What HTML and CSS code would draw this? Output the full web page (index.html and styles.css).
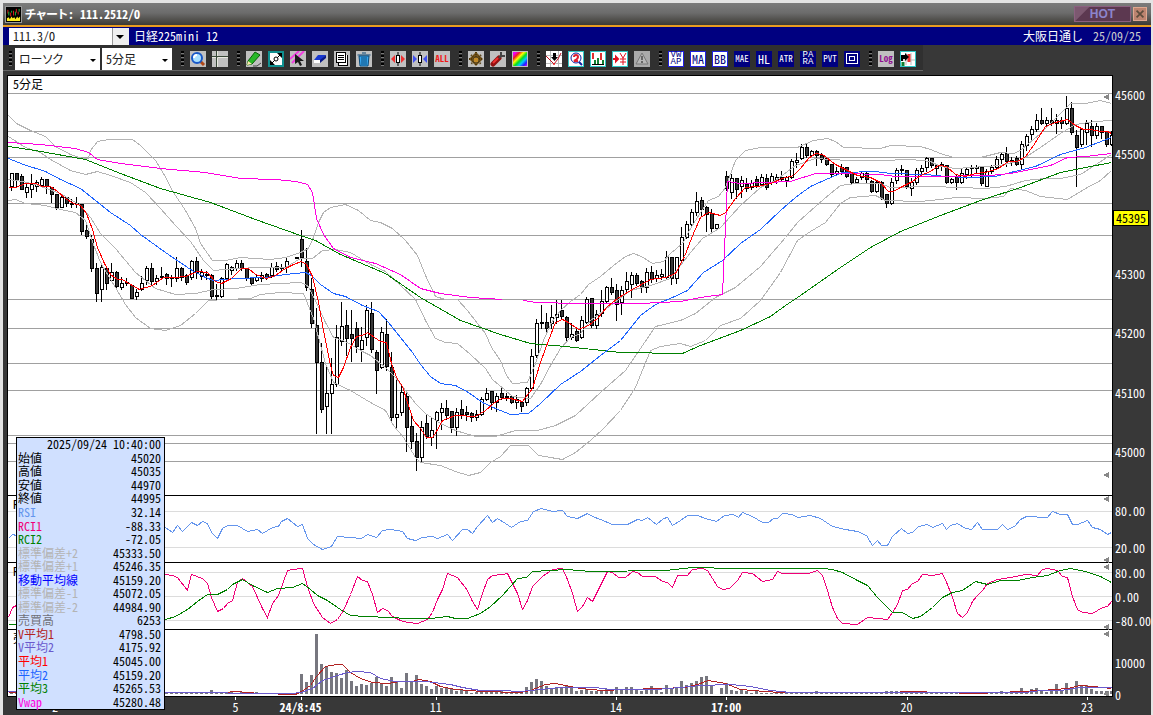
FILE: index.html
```html
<!DOCTYPE html>
<html lang="ja">

<head>
    <meta charset="UTF-8">
    <meta name="viewport" content="width=device-width, initial-scale=1.0">
    <title>チャート: 111.2512/O</title>
    <link rel="stylesheet" href="styles.css">
</head>
<body>
<div class="window">
    <div class="title-bar">
        <svg class="logo" viewBox="0 0 16 16">
            <rect width="16" height="16" fill="#000"/>
            <path d="M2 3v4M5 6v4M8 4v5M11 2v4M13 5v3" stroke="#e02020"/>
            <path d="M3 5v4M6 4v2M10 5v4M14 2v3" stroke="#20c040"/>
            <path d="M1 15v-3l2-1 1 2 2-3 1 2 2-1 1 2 2-3 1 2 2-2v5z" fill="#ffee20"/>
        </svg>
        <h1>チャート: 111.2512/O</h1>
        <button class="hot">HOT</button>
        <button class="close" aria-label="閉じる">
            <svg viewBox="0 0 14 14"><path d="M3 3l8 8M11 3l-8 8" stroke="#5c4c3c" stroke-width="2"/></svg>
        </button>
    </div>
    <div class="symbol-bar">
        <span class="combo combo-symbol">
            <select aria-label="銘柄コード"><option>111.3/O</option></select>
        </span>
        <span class="symbol-name">日経225mini 12</span>
        <span class="session">大阪日通し</span>
        <span class="date">25/09/25</span>
    </div>
    <div class="toolbar">
        <i class="grip"></i>
        <span class="combo combo-type">
            <select aria-label="チャート種類"><option>ローソク</option></select>
        </span>
        <span class="combo combo-span">
            <select aria-label="足種"><option>5分足</option></select>
        </span>
        <i class="grip"></i>
        <button class="tool" aria-label="拡大">
            <svg viewBox="0 0 16 16"><path d="M10 10l4 4" stroke="#b04818" stroke-width="3"/><circle cx="7" cy="7" r="5" fill="#a8e0ff" stroke="#1858c8" stroke-width="2"/><path d="M4 7q0-3 3-3" stroke="#fff" stroke-width="2" fill="none"/></svg>
        </button>
        <button class="tool" aria-label="十字線">
            <svg viewBox="0 0 16 16" class="crisp"><path d="M0 5.500h16M4.500 0v16" stroke="#384838"/><path d="M0 6.500h4M6 6.500h10M5.500 7v9M5.500 0v5" stroke="#e8e8e0"/></svg>
        </button>
        <i class="grip"></i>
        <button class="tool" aria-label="ペン">
            <svg viewBox="0 0 16 16"><path d="M2 10l7-9 5 3-8 9-5 1z" fill="#28b828" stroke="#086008"/><path d="M1 14l1-4 4 3z" fill="#ffe8b0"/><path d="M7 15h4l4-3" stroke="#444" fill="none"/></svg>
        </button>
        <button class="tool" aria-label="線の移動">
            <svg viewBox="0 0 16 16"><rect x="1" y="1" width="14" height="14" fill="#fff" stroke="#109090" stroke-width="2"/><path d="M3 13L13 3" stroke="#000"/><path d="M9 2h5v5zM2 9v5h5z" fill="#000"/><circle cx="8" cy="8" r="2" fill="#fff" stroke="#000"/></svg>
        </button>
        <button class="tool" aria-label="線の選択">
            <svg viewBox="0 0 16 16"><path d="M0 8l9-8M2 12L14 0" stroke="#f040e0" stroke-width="2"/><path d="M5 3v10l3-2 2 4 2-1-2-4h4z" fill="#181818"/></svg>
        </button>
        <button class="tool" aria-label="消去">
            <svg viewBox="0 0 16 16"><path d="M6 4h8l-5 5H2z" fill="#1838d0"/><path d="M2 9h6v3H2z" fill="#fff"/><path d="M8 12V9l6-5v3z" fill="#081888"/></svg>
        </button>
        <button class="tool" aria-label="コピー">
            <svg viewBox="0 0 16 16" class="crisp"><path d="M4.500 4v10.500h9V4" fill="#fff" stroke="#000"/><rect x="2.500" y="1.500" width="9" height="10" fill="#fff" stroke="#000"/><path d="M4 4.500h6M4 6.500h6M4 8.500h6" stroke="#000"/></svg>
        </button>
        <button class="tool" aria-label="削除">
            <svg viewBox="0 0 16 16"><path d="M3 5h10l-1 10H4z" fill="#38a8f0" stroke="#084878"/><path d="M1.500 4h13M6 2h4M6 6v8M8 6v8M10 6v8" stroke="#084878"/></svg>
        </button>
        <i class="grip"></i>
        <button class="tool" aria-label="間隔を広げる">
            <svg viewBox="0 0 16 16"><path d="M5 4v8L1 8zM11 4v8l4-4z" fill="#f03030"/><path d="M8 1v14" stroke="#000"/><rect x="6.500" y="4.500" width="3" height="7" fill="#fff" stroke="#000"/></svg>
        </button>
        <button class="tool" aria-label="間隔を狭める">
            <svg viewBox="0 0 16 16"><path d="M1 4v8l4-4zM15 4v8l-4-4z" fill="#4050f0"/><path d="M8 1v14" stroke="#000"/><rect x="6.500" y="4.500" width="3" height="7" fill="#fff" stroke="#000"/></svg>
        </button>
        <button class="tool tool-all">ALL</button>
        <i class="grip"></i>
        <button class="tool" aria-label="設定">
            <svg viewBox="0 0 16 16"><path d="M8 1l7 7-7 7-7-7z" fill="#705018"/><path d="M3 4l10 9M13 4L3 13M8 1v14M1 8h14" stroke="#503808" stroke-width="2" stroke-dasharray="1 1"/><circle cx="8" cy="9" r="3" fill="#c08828" stroke="#504020"/></svg>
        </button>
        <button class="tool" aria-label="ツール">
            <svg viewBox="0 0 16 16"><path d="M3 13l6-6" stroke="#901010" stroke-width="5" stroke-linecap="round"/><path d="M3 12l5-5" stroke="#f03030" stroke-width="2"/><path d="M9 7l2-2V1M11 5h4" stroke="#444" stroke-width="2" fill="none"/></svg>
        </button>
        <button class="tool" aria-label="配色">
            <svg viewBox="0 0 16 16"><defs><linearGradient id="rainbow" x1="0" y1="0" x2="1" y2="1"><stop offset=".1" stop-color="#e0f"/><stop offset=".25" stop-color="#f02020"/><stop offset=".4" stop-color="#ff0"/><stop offset=".55" stop-color="#0d2"/><stop offset=".7" stop-color="#0cf"/><stop offset=".85" stop-color="#22f"/><stop offset="1" stop-color="#d0f"/></linearGradient></defs><rect x="1" y="1" width="14" height="14" fill="url(#rainbow)"/></svg>
        </button>
        <i class="grip"></i>
        <button class="tool" aria-label="売買サイン">
            <svg viewBox="0 0 16 16"><rect width="16" height="16" fill="#fff"/><path d="M0 4.500h16M0 12.500h16M4.500 0v16M12.500 0v16" stroke="#bbb"/><path d="M0 5l4 4 4 4 4-5 3-6" stroke="#c01020" fill="none"/><path d="M7 2h3v4h2L8.500 10 5 6h2z" fill="#000"/><circle cx="8" cy="13" r="1" fill="#f02020"/></svg>
        </button>
        <button class="tool cyan" aria-label="銘柄検索">
            <svg viewBox="1 1 14 14"><path d="M11 11l3 3" stroke="#1020a0" stroke-width="2"/><circle cx="8" cy="7" r="5" fill="#fff" stroke="#1020a0"/><path d="M6 6q0-2 2-2t2 2-4 4h4" stroke="#e02030" fill="none" stroke-width="2"/></svg>
        </button>
        <button class="tool cyan" aria-label="価格帯">
            <svg viewBox="1 1 14 14"><path d="M3 2v6M11 2v7" stroke="#e03030" stroke-width="2"/><path d="M5 13V9M8 13V7M13 13V9" stroke="#108030" stroke-width="2"/><path d="M2 13.500h12" stroke="#000"/></svg>
        </button>
        <button class="tool cyan" aria-label="注文">
            <svg viewBox="1 1 14 14"><path d="M1 8h3M4 6l2 2-2 2z" fill="#e01020" stroke="#e01020" stroke-width="2"/><path d="M8 2l3 5 3-5M11 7v7M8 8h6M8 11h6" stroke="#e01020" fill="none"/></svg>
        </button>
        <button class="tool" aria-label="アラート">
            <svg viewBox="0 0 16 16"><rect width="16" height="16" fill="#aaa"/><path d="M8 2l6 11H2z" fill="#b8b8b8" stroke="#777"/><path d="M8 5v4M8 10v2" stroke="#666" stroke-width="2"/></svg>
        </button>
        <i class="grip"></i>
        <button class="tool ind on stack">VW<br>AP</button>
        <button class="tool ind on">MA</button>
        <button class="tool ind on">BB</button>
        <button class="tool ind small">MAE</button>
        <button class="tool ind">HL</button>
        <button class="tool ind small">ATR</button>
        <button class="tool ind stack">PA<br>RA</button>
        <button class="tool ind small">PVT</button>
        <button class="tool ind" aria-label="回帰">
            <svg viewBox="0 0 16 16" class="crisp"><path d="M2.500 2.500h11v10h-11zM5.500 5.500h5v4h-5z" stroke="#fff" fill="none"/></svg>
        </button>
        <i class="grip"></i>
        <button class="tool tool-log">Log</button>
        <button class="tool cyan" aria-label="画面分割">
            <svg viewBox="1 1 14 14"><path d="M1 9h14M6 2v12M11 2v12" stroke="#bbb"/><path d="M9 3v8" stroke="#f03030" stroke-width="3"/><path d="M1 4h4V2l4 4-4 4V8H3v2H1z" fill="#000"/><path d="M3 15v-4" stroke="#108030" stroke-width="3"/></svg>
        </button>
    </div>
    <div class="chart">
        <div class="plot">
            <svg id="plot" viewBox="8 76 1104 620" preserveAspectRatio="none"></svg>
            <span class="span-label">5分足</span>
            <div id="panelNames"></div>
        </div>
        <div id="valueAxis" class="value-axis"></div>
        <div id="timeAxis" class="time-axis"></div>
    </div>
    <table class="info">
        <tbody id="info"></tbody>
    </table>
</div>
<script src="script.js"></script>
</body>
</html>
```
FILE: styles.css
```css
* {
    margin: 0;
    padding: 0;
    box-sizing: border-box;
}

body {
    font: 12px/16px "Noto Sans CJK JP", sans-serif;
    font-feature-settings: "hwid";
    background: #383838;
}

button,
select {
    font: inherit;
    border: 0;
}

svg {
    display: block;
    fill: none;
}

.crisp {
    shape-rendering: crispEdges;
}

.window {
    position: relative;
    display: flex;
    flex-direction: column;
    min-height: 100vh;
    border: solid #e4e4e4;
    border-width: 3px 2px 0 3px;
    background: #383838;
}

.title-bar {
    display: flex;
    align-items: center;
    height: 24px;
    padding: 0 4px 0 2px;
    background: linear-gradient(#7c7c7c, #6c6c6c 45%, #3c3a34);
    border-bottom: 2px solid #e89c20;
    color: #fff;
}

.logo {
    width: 17px;
    height: 17px;
    border: 1px solid #999;
    margin-right: 3px;
}

.title-bar h1 {
    flex: 1;
    font-size: 12px;
    line-height: 20px;
    font-feature-settings: "hwid", "palt";
}

.hot {
    width: 57px;
    height: 16px;
    margin-right: 2px;
    border: 1px solid #8c6080;
    background: linear-gradient(135deg, #7c5870 20%, #5c3850 21%);
    color: #8c84cc;
    font: bold 12px/14px "Liberation Sans", sans-serif;
}

.close {
    width: 14px;
    height: 14px;
    border: 1px solid #e0a890;
    background: #bc8470;
}

.symbol-bar {
    display: flex;
    align-items: center;
    height: 18px;
    padding: 0 10px 0 6px;
    background: #000080;
    color: #fff;
}

.symbol-name {
    flex: 1;
    margin-left: 5px;
}

.date {
    margin-left: 10px;
    color: #ccc;
}

.combo {
    position: relative;
    flex: none;
    height: 22px;
    background: #fff;
    color: #000;
}

.combo select {
    display: block;
    width: 100%;
    height: 100%;
    padding: 0 4px;
    appearance: none;
    background: transparent;
    font-feature-settings: "hwid", "palt";
    color: #202020;
}

.combo::after {
    content: "";
    position: absolute;
    right: 4px;
    top: 50%;
    border: 3px solid transparent;
    border-top-color: #000;
    border-bottom: 0;
    pointer-events: none;
}

.combo-symbol {
    width: 120px;
    height: 17px;
    background: linear-gradient(90deg, #fff 103px, #999 103px, #999 104px, #f0f0f0 104px);
}

.combo-symbol::after {
    right: 5px;
    top: 7px;
    border-width: 4px;
    border-bottom: 0;
}

.combo-type {
    width: 85px;
    margin-right: -4px;
}

.combo-span {
    width: 70px;
}

.toolbar {
    display: flex;
    align-items: center;
    gap: 6px;
    width: 920px;
    height: 26px;
    padding: 2px 3px 0;
    background: #303030;
    border-bottom: 1px solid #666;
}

.grip {
    flex: none;
    width: 3px;
    height: 15px;
    margin-left: 3px;
    background: repeating-linear-gradient(#000 0 2px, #777 2px 3px, transparent 3px 4px);
}

.grip:first-child {
    margin-right: -3px;
}

.tool {
    flex: none;
    width: 16px;
    height: 16px;
    background: #c0c0c0;
    white-space: nowrap;
    text-align: center;
}

.tool svg {
    width: 100%;
    height: 100%;
}

.tool.cyan {
    border: 1px solid #30c8c8;
    background: #fff;
}

.tool-all,
.tool-log {
    font-size: 9px;
    font-weight: bold;
}

.tool-all {
    color: #f01818;
}

.tool-log {
    color: #901090;
}

.ind {
    display: flex;
    align-items: center;
    justify-content: center;
    background: #000080;
    color: #fff;
}

.ind.small {
    font-size: 9px;
}

.ind.stack {
    font-family: "Liberation Mono", monospace;
    font-size: 9px;
    line-height: 7px;
}

.ind.on {
    border: 1px solid #2020e0;
    background: #fff;
    color: #000080;
}

.chart {
    flex: 1;
    display: grid;
    grid-template-columns: minmax(0, 1fr) 38px;
    grid-template-rows: minmax(0, 1fr) 18px;
    padding: 4px 0 0 4px;
}

.plot {
    position: relative;
    border: 1px solid #000;
    background: #fff;
}

.plot svg {
    position: absolute;
    width: 100%;
    height: 100%;
    shape-rendering: crispEdges;
}

.span-label,
.panel-name {
    position: absolute;
    left: 5px;
}

.value-axis,
.time-axis {
    position: relative;
    color: #fff;
    white-space: nowrap;
}

.value-axis span {
    position: absolute;
    left: 2px;
    margin-top: -8px;
}

.value-axis .current {
    left: 0;
    margin-top: -7px;
    padding: 0 2px;
    border: 1px solid #000;
    background: #ff0;
    color: #000;
    line-height: 14px;
}

.time-axis span {
    position: absolute;
    top: 2px;
    transform: translateX(-50%);
}

.time-axis .day {
    font-weight: bold;
}

.time-axis i {
    position: absolute;
    top: 0;
    width: 1px;
    height: 3px;
    background: #fff;
}

.info {
    position: absolute;
    left: 13px;
    bottom: 5px;
    width: 149px;
    height: 273px;
    border: 1px solid #000;
    border-spacing: 0;
    background: #d0e0ff;
    line-height: 11px;
    white-space: nowrap;
}

.info th {
    padding: 0 0 2px 1px;
    text-align: left;
    font-weight: normal;
}

.info td {
    padding: 0 3px 2px 0;
    text-align: right;
}

.black { color: #000; }
.rsi { color: #6495ed; }
.rci1 { color: #f00078; }
.rci2 { color: #008000; }
.band { color: #b4b4b4; }
.mid { color: #0000ff; }
.volume { color: #707078; }
.vavg1 { color: #b22222; }
.vavg2 { color: #6a5acd; }
.avg1 { color: #ff0000; }
.avg2 { color: #1e64ff; }
.avg3 { color: #008000; }
.vwap { color: #ff00e0; }
```
FILE: script.js
```javascript
var TOP = 76, HEIGHT = 620, LEFT = 8, WIDTH = 1104;

// high, body top, body bottom, low, filled
var candles = [
    [173,173,186,190,0],[173,173,180,186,1],[174,176,189,189,1],[183,187,192,197,0],[174,184,189,197,0],[180,182,186,191,0],
    [177,179,185,186,0],[179,179,186,193,1],[187,187,194,202,1],[194,194,207,209,1],[195,197,207,207,0],[197,197,203,206,1],
    [199,203,204,207,0],[197,203,204,207,0],[204,204,231,234,1],[225,230,236,238,1],[235,239,268,271,1],[263,268,293,301,1],
    [263,267,289,301,0],[266,268,283,289,1],[263,272,280,281,0],[271,272,286,289,1],[277,283,287,289,0],[278,282,283,285,0],
    [285,285,298,298,1],[289,292,296,299,0],[276,283,289,290,0],[266,268,280,284,0],[263,268,281,284,1],[275,278,281,284,0],
    [267,276,277,279,0],[273,274,278,284,1],[275,277,278,286,0],[257,268,278,281,0],[267,268,277,280,1],[274,275,282,284,1],
    [260,261,277,279,0],[257,261,272,278,1],[269,272,276,279,0],[271,274,275,279,0],[274,275,296,298,1],[284,295,296,299,0],
    [277,278,296,297,0],[263,264,278,280,0],[266,267,270,274,0],[260,263,268,270,0],[260,263,268,270,1],[268,268,278,280,1],
    [277,277,283,284,1],[275,277,280,281,0],[272,275,278,281,0],[273,274,277,279,1],[263,267,275,277,0],[262,266,269,271,1],
    [264,267,268,270,0],[257,261,266,272,0],null,[257,257,258,258,1],[230,239,257,266,1],[248,261,287,290,1],
    [278,289,323,327,1],[308,325,362,433,1],[343,362,409,412,1],[365,393,406,433,0],[358,384,393,433,0],[325,337,384,386,0],
    [302,326,341,345,0],[310,325,338,355,1],[310,334,338,361,1],[322,328,346,352,1],[327,340,349,361,0],[305,310,337,345,0],
    [302,313,349,352,1],[350,352,370,393,1],[327,332,367,368,0],[319,334,366,370,1],[352,367,417,422,1],[378,414,417,429,0],
    [386,392,412,415,0],[391,396,427,451,1],[413,426,441,448,1],[433,441,457,470,1],[421,427,457,461,0],[415,423,436,438,1],
    [418,430,437,445,0],[411,412,420,448,0],[403,408,412,429,0],[400,408,415,419,1],[411,411,427,432,1],[408,412,427,435,0],
    [400,409,414,418,1],[406,412,414,420,1],[412,413,417,421,1],[410,414,417,420,0],[397,399,414,415,0],[388,393,399,400,0],
    [391,391,402,409,1],[393,396,402,411,0],[388,393,397,399,1],[393,396,397,400,0],[396,396,402,403,1],[395,399,402,408,0],
    [402,402,406,411,1],[387,388,402,405,0],[349,356,388,390,0],[319,323,355,357,0],[305,322,323,328,0],[313,322,328,332,1],
    [305,317,323,328,0],[300,314,317,323,0],[300,310,316,318,1],[316,317,337,340,1],[323,334,337,339,0],[328,331,340,341,1],
    [316,320,337,338,0],[297,299,322,323,0],[298,298,325,327,1],[310,314,325,328,0],[290,301,313,316,0],[286,287,301,303,0],
    [278,287,292,294,1],[284,290,304,320,1],[286,290,302,314,0],[272,281,289,293,0],[272,275,284,297,0],[273,275,283,285,1],
    [280,281,287,292,1],[268,272,287,292,0],[266,272,279,282,1],[270,275,278,281,0],[269,274,276,279,0],[251,257,277,278,0],
    [257,257,278,284,1],[257,257,278,283,0],[227,237,260,262,0],[221,224,237,238,0],[209,212,224,226,0],[192,201,212,215,0],
    [197,200,209,216,1],[206,207,214,231,1],[209,213,228,231,1],[224,224,228,228,0],null,[171,176,188,190,1],
    [174,178,192,198,0],[178,178,189,198,1],[176,180,186,197,0],[178,184,188,191,1],[180,183,187,189,0],[176,179,185,187,1],
    [174,177,184,186,0],[174,178,187,189,1],[173,176,182,184,0],[174,177,180,183,0],[171,177,179,181,1],[176,177,180,186,0],
    [159,161,177,178,0],[153,160,162,167,0],[144,147,158,159,0],[144,147,155,157,1],[150,151,155,156,0],[150,151,155,165,1],
    [153,155,159,162,1],[157,158,164,165,1],[164,164,174,177,1],[167,171,173,175,0],[164,167,171,174,1],[167,167,176,177,1],
    [172,173,182,183,1],[177,179,182,183,0],[172,173,177,179,0],[172,173,179,182,1],[180,181,191,192,1],[181,182,191,192,0],
    [181,182,198,199,1],[194,194,203,207,1],[178,182,203,204,0],[168,170,180,183,0],[165,169,170,174,0],[170,170,186,188,1],
    [178,182,188,195,0],[168,170,182,184,0],[165,168,171,173,0],[157,158,167,171,0],[158,158,165,167,1],[164,165,168,174,0],
    [162,164,166,170,1],[165,165,182,183,1],[178,179,182,183,0],[174,176,182,189,1],[168,173,182,183,0],[167,169,174,178,0],
    [165,167,168,176,0],[165,167,168,173,0],[167,167,183,185,1],[169,171,186,186,0],[165,167,171,173,0],[156,159,167,168,0],
    [153,154,159,163,0],[147,153,161,166,1],[157,160,162,165,0],[156,158,164,165,1],[141,144,164,168,0],[134,136,145,150,0],
    [126,129,134,139,0],[114,120,129,131,0],[108,120,123,124,1],[117,120,123,126,0],[108,120,123,125,1],[114,120,123,133,0],
    [117,120,123,128,1],[96,108,123,124,0],[102,108,132,134,1],[130,135,147,186,1],[128,129,144,146,0],[120,123,132,144,0],
    [120,126,135,146,1],[123,126,135,138,0],[126,126,132,138,1],[131,131,144,146,1],[131,135,144,145,0]
];

// bar heights
var volume = [
    2,1,1,2,1,2,1,1,2,1,3,2,2,2,3,2,4,4,3,2,2,1,2,1,2,1,1,2,1,2,1,1,1,2,1,1,1,1,1,2,4,2,2,1,2,1,2,1,1,2,1,1,1,1,1,1,0,1,
    20,12,19,60,30,27,22,21,16,24,13,8,10,9,11,17,10,8,17,13,6,21,12,19,10,8,5,8,6,6,5,3,5,3,1,2,3,2,3,2,3,2,1,1,1,
    7,12,15,13,8,6,6,7,8,7,3,4,5,3,3,4,5,5,7,5,7,7,5,3,5,8,4,2,9,5,7,13,9,11,13,17,18,9,0,6,11,4,3,4,3,1,3,1,
    1,1,2,1,2,1,2,2,2,2,3,2,1,2,1,2,1,1,2,2,1,1,2,1,3,3,3,2,3,2,2,1,1,1,2,1,1,1,1,1,1,1,1,1,1,1,1,3,1,1,2,
    6,2,5,6,3,2,5,10,4,11,6,13,8,9,5,3,3,3,3
];

var priceLines = [93, 131, 157, 203, 235, 299, 328, 363, 390, 435, 443, 461];
var lightLines = [511, 547, 572, 596, 620];
var dividers = [495, 562, 629];

var lines = [
    ['band', '8,115 16,123 30,130 45,136 55,146 70,154 82,158 88,158 90,150 97,141 108,139 132,139 140,145 155,160 163,173 173,192 185,210 195,228 200,243 212,260 225,260 240,257 270,259 285,257 300,252 308,248 313,237 318,222 323,212 330,207 345,204 358,210 370,220 380,222 392,228 405,240 417,255 425,275 435,296 445,299 457,299 467,310 477,323 485,333 491,347 500,360 506,375 512,383 527,382 535,363 543,340 551,322 560,310 570,301 580,294 588,284 600,276 613,265 625,256 633,253 641,256 652,263 663,261 670,253 682,243 690,228 700,212 708,200 718,196 725,187 735,160 745,150 760,147 797,147 813,140 827,138 835,141 843,147 880,148 890,145 920,146 930,149 940,153 953,157 980,157 1000,152 1013,153 1020,150 1040,133 1063,110 1070,103 1085,103 1100,100 1111,103'],
    ['band', '8,136 25,147 40,152 50,159 70,170 85,174 97,171 110,175 130,182 145,192 160,208 175,225 190,241 203,260 213,270 235,268 260,267 285,267 300,258 312,258 322,250 335,249 350,252 370,264 385,271 400,285 415,299 425,320 435,338 445,342 457,343 470,354 485,368 492,379 505,390 512,396 530,398 540,384 550,365 560,348 570,337 580,333 590,320 610,305 630,290 650,285 670,278 690,252 702,238 720,227 740,205 760,187 775,180 795,165 815,158 830,159 848,160 880,160 910,159 930,161 940,166 955,168 1000,165 1020,160 1040,147 1060,133 1075,124 1095,121 1111,120'],
    ['band', '8,179 22,181 35,184 60,193 80,205 90,217 100,233 115,248 135,272 155,288 175,294 195,293 213,289 235,288 260,284 300,282 307,285 315,300 325,322 333,337 345,341 360,350 370,355 385,367 395,377 405,390 415,403 425,413 440,423 455,430 475,436 495,436 515,430 537,430 555,425 575,415 600,392 625,370 640,348 655,326 680,320 695,313 715,297 735,287 760,266 785,237 797,222 815,206 830,193 840,185 855,183 880,183 890,187 930,186 960,187 985,188 1005,186 1025,180 1045,178 1060,178 1080,174 1111,154'],
    ['band', '8,200 15,199 25,203 45,205 60,209 75,212 85,220 93,244 100,262 115,287 125,304 135,317 150,328 165,330 180,325 195,313 208,300 225,299 250,298 260,294 280,292 303,293 313,318 325,363 333,382 350,390 370,402 385,410 393,425 403,437 415,457 420,462 440,465 455,471 468,475 480,472 490,462 500,456 510,445 528,445 538,455 562,459 575,452 590,440 602,429 620,410 635,387 650,350 660,346 680,343 690,346 705,340 720,325 740,318 760,300 780,272 797,240 810,231 825,222 840,203 850,197 875,195 885,200 920,201 940,199 955,197 985,198 1003,196 1010,188 1025,190 1040,196 1067,199 1085,188 1100,180 1111,170'],
    ['avg3', '8,146 35,150 85,159 120,173 160,188 210,202 255,219 300,235 315,240 340,254 385,273 420,297 460,320 500,334 530,343 565,346 620,352 682,353 700,345 740,330 770,316 785,305 800,295 840,267 870,247 900,231 940,215 980,200 1020,187 1060,172 1085,167 1111,162'],
    ['avg2', '8,158 23,164 45,171 60,179 80,188 95,200 110,212 130,225 140,234 165,252 190,269 205,277 213,280 235,278 265,277 285,274 305,272 311,275 320,284 333,293 345,296 362,305 378,311 388,322 400,337 412,352 420,364 430,376 440,383 455,385 468,392 482,402 495,408 510,414 528,413 540,403 560,384 580,371 600,355 620,340 640,315 655,304 672,297 687,290 703,272 722,260 740,243 760,229 780,210 795,197 810,186 828,178 842,172 875,171 890,173 925,174 945,176 970,177 995,176 1010,172 1035,166 1060,154 1085,147 1111,137'],
    ['vwap', '8,142 40,144 75,148 88,152 97,159 120,163 160,168 205,172 240,178 275,179 296,181 307,184 312,192 316,218 323,234 333,248 350,257 375,263 400,274 420,288 440,293 470,297 502,299'],
    ['vwap', '523,300 535,302 580,303 640,303 680,301 700,297 722,294 727,181 740,183 790,181 815,173 845,173 880,174 895,176 930,176 990,175 1010,173 1030,169 1050,165 1067,157 1085,156 1111,153'],
    ['avg1', '8,187 15,187 25,183 35,183 42,186 50,186 57,191 65,198 73,203 80,205 86,213 92,229 97,247 104,263 110,274 117,279 122,279 130,284 139,289 152,285 163,277 175,277 185,276 197,271 207,272 215,281 221,283 231,278 241,268 248,268 255,274 266,278 275,275 285,268 293,264 301,261 306,264 312,276 318,302 323,330 330,365 333,375 338,377 343,367 350,347 356,336 362,335 367,332 374,337 380,341 386,342 391,363 396,377 402,386 407,402 413,420 420,428 426,437 432,437 436,431 442,420 455,415 475,416 485,410 493,403 501,398 510,398 522,401 532,388 540,362 548,340 555,322 562,319 568,322 578,329 588,325 597,318 607,306 617,298 630,290 650,279 665,277 675,273 684,256 693,233 700,217 708,212 720,215 725,212 735,198 745,187 757,186 770,183 782,178 793,175 800,168 808,158 815,153 822,154 835,164 845,169 857,175 870,177 880,182 888,191 893,191 900,187 912,181 920,175 930,171 938,165 946,166 955,174 965,176 975,173 985,172 998,168 1008,161 1017,161 1025,156 1033,145 1045,126 1055,122 1067,119 1075,125 1083,129 1090,129 1100,131 1107,131 1111,133'],
    ['rsi', '8,538 12,534 16,535 60,530 100,536 165,527 172,532 177,525 182,531 191,522 197,525 202,521 207,523 211,532 217,538 222,528 227,525 237,525 247,531 257,529 262,533 272,527 278,526 281,521 287,518 297,526 302,524 307,538 313,544 322,549 331,546 337,536 350,537 361,538 367,534 376,537 382,530 390,529 402,531 407,538 415,540 422,537 432,536 437,538 447,534 452,540 462,529 467,529 472,533 477,526 487,515 492,522 497,518 505,523 511,527 520,521 527,520 533,511 541,508 552,511 562,510 567,516 577,518 587,513 592,516 600,519 612,524 627,524 637,519 642,520 647,517 656,524 663,518 667,517 672,525 680,520 687,515 697,515 705,518 716,521 724,515 733,514 738,517 742,512 752,516 762,522 768,522 773,518 777,518 782,513 792,514 797,517 810,515 820,518 832,526 845,529 857,531 866,535 872,545 877,540 881,545 887,545 892,536 901,528 907,533 912,532 918,526 927,524 932,527 942,523 946,529 950,525 957,523 965,528 971,529 977,522 982,529 997,529 1002,524 1007,529 1014,526 1020,519 1026,516 1047,517 1052,511 1060,514 1067,514 1072,524 1077,524 1087,520 1092,527 1100,529 1107,534 1111,532'],
    ['rci1', '8,617 12,607 16,605 60,590 100,600 140,580 165,574 172,575 177,577 187,590 191,574 202,578 207,583 211,597 217,611 223,608 227,603 232,600 237,582 242,578 252,586 262,608 267,617 272,603 278,595 287,570 292,569 302,568 307,586 313,603 322,617 330,623 337,619 343,610 350,594 357,576 362,580 367,581 372,594 377,612 382,608 387,610 392,616 400,620 407,622 417,623 427,619 432,612 437,599 442,589 447,573 457,577 467,590 472,601 477,609 482,593 487,579 492,575 502,574 507,573 512,583 517,593 522,609 527,600 532,586 542,576 552,569 562,568 567,579 572,593 577,611 582,606 587,597 592,601 600,585 607,571 612,572 618,577 625,577 632,571 637,572 642,576 655,576 662,581 667,582 672,587 677,575 687,575 692,569 702,568 707,570 712,578 717,586 722,589 729,588 737,580 742,572 752,573 762,581 772,579 777,571 782,573 808,573 817,570 822,575 827,590 832,607 837,618 842,623 857,624 867,617 887,619 892,612 897,604 902,590 907,589 912,583 917,581 922,574 932,575 942,573 947,584 952,597 957,613 962,617 967,612 972,601 977,595 982,590 987,583 997,579 1010,577 1025,574 1037,575 1042,569 1047,568 1057,570 1062,576 1067,577 1072,596 1077,609 1082,612 1092,613 1102,607 1107,606 1111,601'],
    ['rci2', '8,624 16,624 130,624 165,619 175,616 187,609 197,601 207,594 217,594 227,589 232,584 242,579 252,585 267,592 277,588 292,587 302,583 310,589 317,595 327,600 340,609 350,615 365,616 390,617 407,618 430,618 447,616 455,618 467,618 480,613 490,606 502,595 517,578 526,577 532,571 567,569 590,571 665,570 692,567 702,567 725,568 822,568 832,569 842,572 857,580 867,585 877,597 892,612 902,612 912,618 920,616 932,607 942,597 952,592 962,590 975,581 987,584 1000,580 1017,580 1032,577 1047,575 1060,570 1070,568 1085,571 1100,576 1111,582'],
    ['vavg1', '8,692 225,692 235,691 260,693 295,694 301,691 310,685 316,676 325,666 337,664 342,664 350,672 360,678 372,682 387,683 400,681 412,681 418,679 430,681 440,686 455,689 470,690 480,691 520,692 530,690 545,684 555,683 565,685 580,688 602,690 625,689 660,688 685,687 697,684 708,680 725,683 740,689 765,691 780,692 890,692 910,691 975,693 1000,692 1020,691 1040,690 1055,689 1067,688 1080,685 1093,686 1111,688'],
    ['vavg2', '8,691 165,692 290,693 301,692 312,688 322,680 337,675 347,672 357,671 370,672 380,678 395,681 425,681 450,684 462,687 480,690 500,690 520,691 540,689 560,687 595,687 610,689 655,689 680,687 700,685 730,684 750,686 770,690 790,692 1025,692 1040,690 1060,690 1080,687 1111,687']
];

function rect(x, y, w, h, fill) {
    return '<rect x="' + x + '" y="' + y + '" width="' + w + '" height="' + h + '" fill="' + fill + '"/>';
}

function drawPlot() {
    var out = '';
    lightLines.forEach(y => out += rect(LEFT, y, WIDTH, 1, '#dcdcdc'));
    priceLines.forEach(y => out += rect(LEFT, y, WIDTH, 1, '#a0a0a0'));

    candles.forEach((c, i) => {
        if (!c) return;
        var x = 11 + i * 5;
        var h = c[2] - c[1];
        out += rect(x, c[0], 1, c[3] - c[0] + 1, '#000');
        out += rect(x - 1, c[1], 4, h + 1, '#000');
        if (h > 1) {
            out += rect(x, c[1] + 1, 2, h - 1, c[4] ? '#383838' : '#fff');
        }
    });

    volume.forEach((v, i) => out += rect(10 + i * 5, 694 - v, 3, v, '#77777f'));
    dividers.forEach(y => out += rect(LEFT, y, WIDTH, 1, '#000'));

    lines.forEach(l => {
        out += '<polyline class="' + l[0] + '" stroke="currentColor" points="' + l[1] + '" transform="translate(.5 .5)"/>';
    });

    // scroll marks at the right edge of each panel
    [97, 475, 499, 560, 567, 627, 634, 694].forEach(y => {
        out += '<path d="M1103 ' + y + 'l6 -3v6z" fill="#888"/>';
    });
    document.getElementById('plot').innerHTML = out;
}

function percentY(y) {
    return (y - TOP) / HEIGHT * 100 + '%';
}

function percentX(x) {
    return (x - LEFT) / WIDTH * 100 + '%';
}

function drawAxes() {
    var values = [
        [96, '45600'], [155, '45500'], [218, '45395', 'current'], [274, '45300'], [333, '45200'], [393, '45100'], [452, '45000'],
        [511, '80.00'], [547, '20.00'], [572, '80.00'], [596, '0.00'], [620, '-80.00'], [662, '10000'], [694, '0']
    ];
    document.getElementById('valueAxis').innerHTML = values.map(v =>
        '<span class="' + (v[2] || '') + '" style="top:' + percentY(v[0]) + '">' + v[1] + '</span>').join('');

    var times = [[56, '2'], [236, '5'], [301, '24/8:45', 'day'], [436, '11'], [616, '14'], [726, '17:00', 'day'], [906, '20'], [1086, '23']];
    document.getElementById('timeAxis').innerHTML = times.map(t =>
        '<i style="left:' + percentX(t[0]) + '"></i>' +
        '<span class="' + (t[2] || '') + '" style="left:' + percentX(t[0]) + '">' + t[1] + '</span>').join('');

    document.getElementById('panelNames').innerHTML = [[496, 'RSI'], [563, 'RCI'], [630, '売買高']].map(p =>
        '<span class="panel-name" style="top:' + percentY(p[0]) + '">' + p[1] + '</span>').join('');
}

function drawInfo() {
    var rows = [
        ['始値', '45020', 'black'], ['高値', '45035', 'black'], ['安値', '44970', 'black'], ['終値', '44995', 'black'],
        ['RSI', '32.14', 'rsi'], ['RCI1', '-88.33', 'rci1'], ['RCI2', '-72.05', 'rci2'],
        ['標準偏差+2', '45333.50', 'band'], ['標準偏差+1', '45246.35', 'band'], ['移動平均線', '45159.20', 'mid'],
        ['標準偏差-1', '45072.05', 'band'], ['標準偏差-2', '44984.90', 'band'], ['売買高', '6253', 'volume'],
        ['V平均1', '4798.50', 'vavg1'], ['V平均2', '4175.92', 'vavg2'], ['平均1', '45045.00', 'avg1'],
        ['平均2', '45159.20', 'avg2'], ['平均3', '45265.53', 'avg3'], ['Vwap', '45280.48', 'vwap']
    ];
    document.getElementById('info').innerHTML = '<tr><td colspan="2">2025/09/24 10:40:00</td></tr>' + rows.map(r =>
        '<tr><th class="' + r[2] + '">' + r[0] + '</th><td>' + r[1] + '</td></tr>').join('');
}

drawPlot();
drawAxes();
drawInfo();
```
